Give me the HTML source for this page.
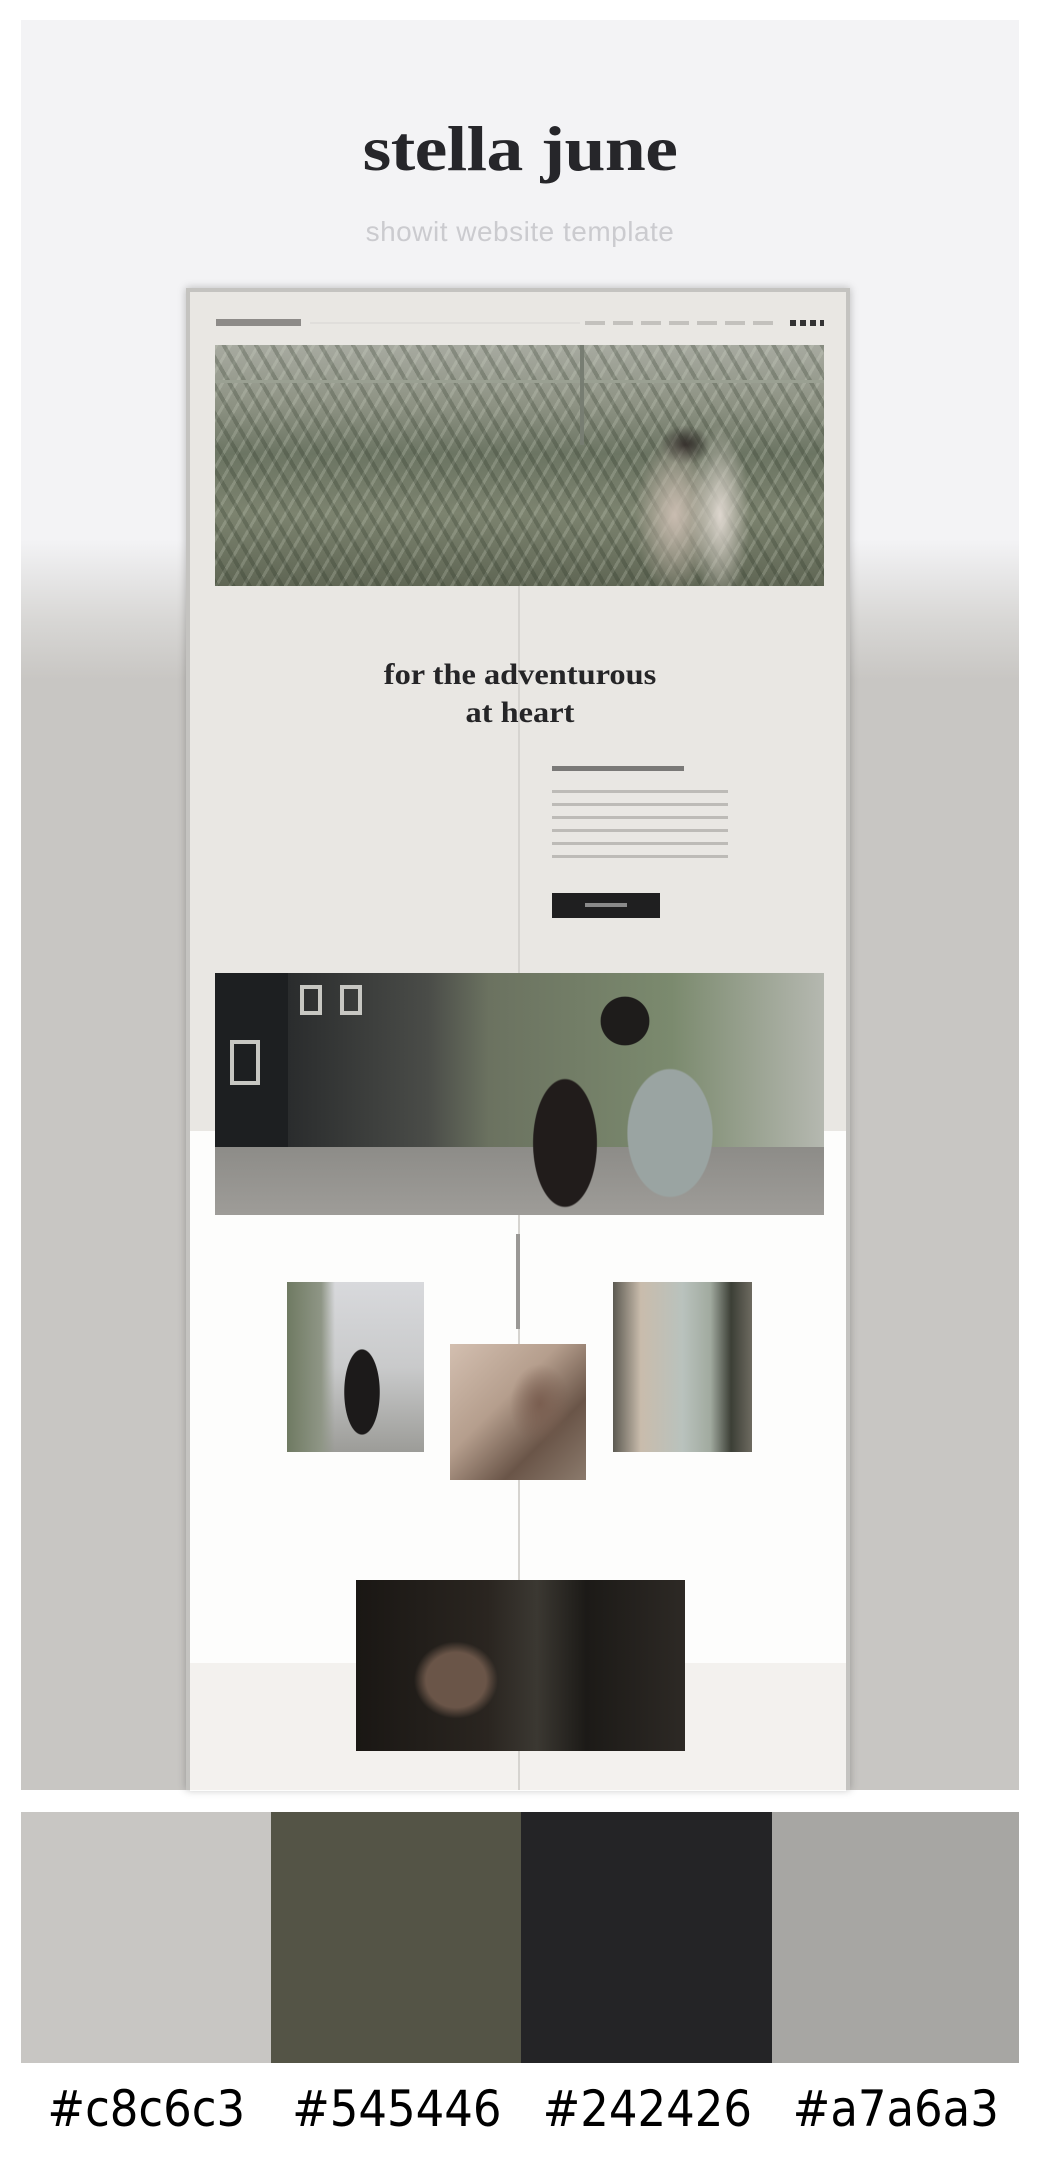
<!DOCTYPE html>
<html><head><meta charset="utf-8"><style>
*{margin:0;padding:0;box-sizing:border-box}
body{width:1040px;height:2165px;background:#fff;position:relative;overflow:hidden;font-family:"Liberation Sans",sans-serif}
.a{position:absolute}
#panel{left:21px;top:20px;width:998px;height:1770px;background:linear-gradient(#f3f3f5 0,#f3f3f5 520px,#d8d7d5 600px,#c8c6c3 660px,#c8c6c3 100%)}
#title{left:0;width:1040px;top:112px;text-align:center;font-family:"Liberation Serif",serif;font-weight:bold;font-size:64px;letter-spacing:-0.5px;color:#26262a;transform:scaleX(1.15)}
#sub{left:0;width:1040px;top:216px;text-align:center;font-size:28px;color:#cbcbcf;letter-spacing:0.5px}
#frame{left:186px;top:288px;width:664px;height:1502px;background:#e9e7e3;border:4px solid #c4c3c0;border-bottom:none;box-shadow:0 0 8px rgba(0,0,0,.25)}
.ph{position:absolute}
</style></head><body>
<div id="panel" class="a"></div>
<div id="title" class="a">stella june</div>
<div id="sub" class="a">showit website template</div>
<div id="frame" class="a"></div>
<div class="a" style="left:190px;top:1131px;width:656px;height:660px;background:#fdfdfc"></div>
<div class="a" style="left:190px;top:1663px;width:656px;height:127px;background:#f3f1ee"></div>
<div class="a" style="left:518px;top:586px;width:2px;height:1204px;background:#d6d4d0"></div>
<div class="a" style="left:216px;top:319px;width:85px;height:7px;background:#8d8b88"></div>
<div class="a" style="left:310px;top:322px;width:270px;height:2px;background:#e0dedb"></div>
<div class="a" style="left:585px;top:321px;width:190px;height:4px;background:repeating-linear-gradient(90deg,#c3c1bd 0 20px,transparent 20px 28px)"></div>
<div class="a" style="left:790px;top:320px;width:34px;height:6px;background:repeating-linear-gradient(90deg,#333 0 6px,transparent 6px 10px)"></div>
<div class="ph" style="left:215px;top:345px;width:609px;height:241px;background:
radial-gradient(ellipse 30px 90px at 505px 170px,#ddd6ce,transparent),
radial-gradient(ellipse 40px 80px at 460px 170px,#c9bcb0,transparent),
radial-gradient(ellipse 25px 20px at 470px 100px,#2a2522,transparent),
repeating-linear-gradient(60deg,rgba(40,50,35,.25) 0 4px,transparent 4px 14px),
repeating-linear-gradient(120deg,rgba(220,225,210,.2) 0 3px,transparent 3px 12px),
linear-gradient(180deg,#a7aaa0 0,#8d9283 25%,#6c7563 45%,#7c836f 70%,#5f6654 100%)"></div>
<div class="a" style="left:215px;top:380px;width:609px;height:3px;background:#9aa092"></div>
<div class="a" style="left:580px;top:345px;width:4px;height:100px;background:#777d72"></div>
<div class="a" style="left:270px;top:656px;width:500px;text-align:center;font-family:'Liberation Serif',serif;font-weight:bold;font-size:30px;line-height:38px;color:#252527;transform:scaleX(1.08)">for the adventurous<br>at heart</div>
<div class="a" style="left:552px;top:766px;width:132px;height:5px;background:#7a7977"></div>
<div class="a" style="left:552px;top:790px;width:176px;height:78px;background:repeating-linear-gradient(180deg,#bdbbb7 0 3px,transparent 3px 13px)"></div>
<div class="a" style="left:552px;top:893px;width:108px;height:25px;background:#1f1f20"></div>
<div class="a" style="left:585px;top:903px;width:42px;height:4px;background:#8a8a8a"></div>
<div class="ph" style="left:215px;top:973px;width:609px;height:242px;background:
radial-gradient(ellipse 40px 40px at 410px 48px,#1e1c1b 60%,transparent 62%),
radial-gradient(ellipse 45px 90px at 350px 170px,#211c1b 70%,transparent 72%),
radial-gradient(ellipse 60px 90px at 455px 160px,#9aa4a2 70%,transparent 72%),
linear-gradient(180deg,transparent 0,transparent 72%,#8d8c88 72%,#9e9c98 100%),
linear-gradient(90deg,#1d1f21 0,#1d1f21 12%,#2a2c2d 12%,#4a4c48 35%,#6b7260 45%,#7b8a6e 75%,#b5b8b0 100%)"></div>
<div class="a" style="left:230px;top:1040px;width:30px;height:45px;border:4px solid #c7c7c2"></div>
<div class="a" style="left:300px;top:985px;width:22px;height:30px;border:4px solid #c7c7c2"></div>
<div class="a" style="left:340px;top:985px;width:22px;height:30px;border:4px solid #c7c7c2"></div>
<div class="a" style="left:516px;top:1234px;width:4px;height:95px;background:#9a9895"></div>
<div class="ph" style="left:287px;top:1282px;width:137px;height:170px;background:
radial-gradient(ellipse 25px 60px at 75px 110px,#1c1a1a 70%,transparent 72%),
linear-gradient(90deg,#6f7a62 0,#8f9686 25%,transparent 35%),
linear-gradient(180deg,#d8d9dc 0,#c9cacb 50%,#9c9c98 100%)"></div>
<div class="ph" style="left:450px;top:1344px;width:136px;height:136px;background:
radial-gradient(ellipse 30px 40px at 90px 60px,#7a5e50,transparent),
linear-gradient(135deg,#d3bfb0 0,#b59e8d 40%,#6a5548 70%,#8b7a6c 100%)"></div>
<div class="ph" style="left:613px;top:1282px;width:139px;height:170px;background:
linear-gradient(90deg,#5c5a52 0,#c9bcac 20%,#b9c2bd 50%,#a1aa9f 70%,#3c3f36 85%,#6d6a60 100%)"></div>
<div class="ph" style="left:356px;top:1580px;width:329px;height:171px;background:
radial-gradient(ellipse 60px 55px at 100px 100px,#6a5548 50%,transparent 70%),
linear-gradient(90deg,#1a1714 0,#2a2520 40%,#3b3832 55%,#1c1a17 70%,#2d2925 100%)"></div>
<div class="a" style="left:21px;top:1812px;width:251px;height:251px;background:#c8c6c3"></div>
<div class="a" style="left:271px;top:1812px;width:251px;height:251px;background:#545446"></div>
<div class="a" style="left:521px;top:1812px;width:252px;height:251px;background:#242426"></div>
<div class="a" style="left:772px;top:1812px;width:247px;height:251px;background:#a7a6a3"></div>
<div class="a" style="left:21px;top:2080px;width:998px;font-family:'DejaVu Sans Condensed','DejaVu Sans',sans-serif;font-size:50px;color:#000;display:flex">
<div style="width:251px;text-align:center">#c8c6c3</div><div style="width:251px;text-align:center">#545446</div><div style="width:251px;text-align:center">#242426</div><div style="width:247px;text-align:center">#a7a6a3</div></div>
</body></html>
